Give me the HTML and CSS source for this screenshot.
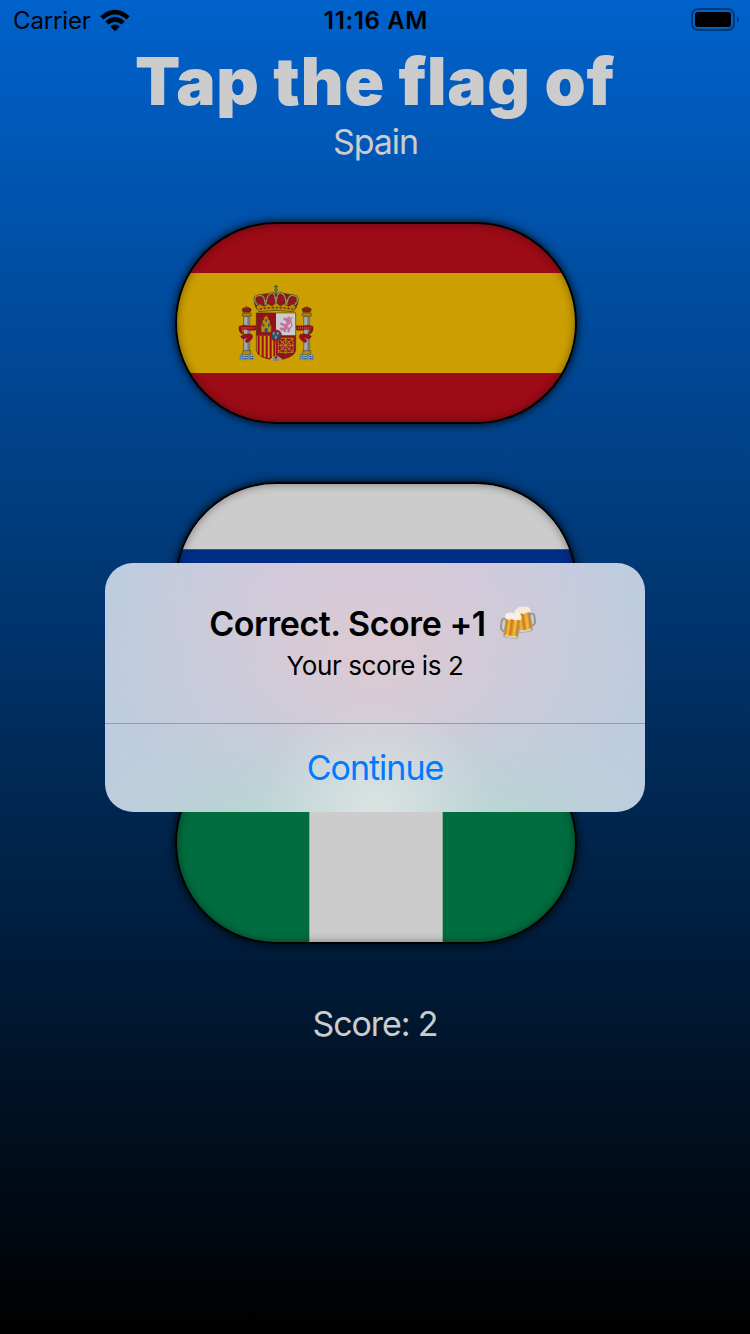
FILE: index.html
```html
<!DOCTYPE html>
<html lang="en">
<head>
<meta charset="utf-8">
<title>Guess the Flag</title>
<link rel="stylesheet" href="styles.css">
</head>
<body>
<div class="screen">
  <header class="status">
    <div class="status-left">
      <span class="carrier">Carrier</span>
      <svg class="wifi" viewBox="0 0 30 23" width="30" height="23">
        <path d="M0.3 7.3Q15-5.6 29.7 7.3L26.6 10.5Q15 .6 3.4 10.5Z"/>
        <path d="M5.3 12.4Q15 3.8 24.7 12.4L21.5 15.6Q15 10.1 8.5 15.6Z"/>
        <path d="M10.3 17.5Q15 13.5 19.7 17.5L15 22.3Z"/>
      </svg>
    </div>
    <span class="time">11:16 AM</span>
    <svg class="battery" viewBox="0 0 48 24" width="48" height="24">
      <rect x="1" y="1" width="42" height="21" rx="6" fill="none" stroke="#000" stroke-opacity=".4" stroke-width="2"/>
      <rect x="4" y="4" width="36" height="15" rx="3"/>
      <path d="M46 8Q48 9 48 11.5T46 15Z" fill-opacity=".4"/>
    </svg>
  </header>
  <main class="game">
    <h1 class="title">Tap the flag of</h1>
    <p class="country">Spain</p>
    <div class="flags">
      <div class="flag">
        <svg viewBox="0 0 400 200" width="400" height="200">
          <path fill="#9d0b17" d="M0 0H400V200H0Z"/>
          <path fill="#cc9f00" d="M0 50H400V150H0Z"/>
          <g transform="translate(49 52) scale(.33333)">
            <g stroke="#33311d" stroke-width="1.5">
              <g id="pillar">
                <path fill="#a8a8aa" d="M56 124H74V236H56Z"/>
                <path fill="#777a80" stroke="none" d="M67 125H73V235H67Z"/>
                <path fill="#b48d00" d="M52 115H79V123H52ZM54 227H77V239H51Z"/>
                <path fill="#8d1a19" d="M54 112L51 102L58 98L65 96L72 98L79 102L76 112Z"/>
                <path stroke="#6c5a08" stroke-width="2" d="M65 94V103M61 97H69"/>
                <path fill="#a6b4c3" stroke="#4b6584" d="M45 239H84V254H45Z"/>
                <path fill="none" stroke="#1d579b" stroke-width="3" d="M46 244Q51 241 55 244T65 244T75 244T84 244M46 250Q51 247 55 250T65 250T75 250T84 250"/>
              </g>
              <use href="#pillar" x="180"/>
            </g>
            <g fill="#a50b18" stroke="#531012" stroke-width="1.5">
              <path d="M42 155Q54 147 70 153L92 152V165Q74 167 63 163L52 162Q48 168 56 177L48 175Q40 167 42 155Z"/>
              <path d="M47 184Q58 176 69 177Q83 176 83 184Q83 195 64 203L61 195L72 187L53 192Z"/>
              <path d="M264 155Q252 147 236 153L214 152V165Q232 167 243 163L254 162Q258 168 250 177L258 175Q266 167 264 155Z"/>
              <path d="M259 184Q248 176 237 177Q223 176 223 184Q223 195 242 203L245 195L234 187L253 192Z"/>
            </g>
            <path stroke="#c69c35" stroke-width="3" stroke-dasharray="3 3" d="M49 159H87M219 159H257"/>
            <path fill="#96101b" stroke="#37331d" stroke-width="2" d="M94 114H212V226Q209 249 153 256Q97 249 94 226Z"/>
            <path fill="#ccc" d="M153 115H211V181H153Z"/>
            <path fill="#c99b09" d="M95 182H153V253Q97 247 95 226Z"/>
            <path stroke="#9d0c17" stroke-width="6" d="M101 182V238M113 182V247M125 182V250M137 182V252M148 182V253"/>
            <path fill="#b58b08" stroke="#423c19" stroke-width="1.5" d="M108 172V150H112V135H116V127H120V122H127V127H131V135H135V150H139V172Z"/>
            <path fill="#234d86" d="M119 160H128V172H119ZM113 148H118V155H113ZM129 148H134V155H129ZM121 133H126V140H121Z"/>
            <path fill="none" stroke="#c66e9e" stroke-width="7" stroke-linejoin="round" d="M176 130L184 135L192 128L187 141L195 139L188 149L177 151L166 145M187 145L183 158L170 164L166 158M183 156L192 162L190 172M183 157L178 171"/>
            <path fill="none" stroke="#c66e9e" stroke-width="4" d="M190 162Q205 156 199 144T202 127"/>
            <g fill="none" stroke="#b88e22" stroke-width="3.5" stroke-dasharray="4 1.5">
              <path d="M160 190H204V232H160ZM182 190V238M160 211H206M162 192L202 230M202 192L162 230"/>
              <circle cx="182" cy="211" r="14"/>
            </g>
            <circle cx="182" cy="211" r="3.5" fill="#57833a"/>
            <path fill="#a9a99e" d="M134 254L153 240L173 253Q154 260 134 254Z"/>
            <path stroke="#4a5e3c" stroke-width="2" d="M143 252H164M153 239V254"/>
            <path fill="#9a1922" d="M149 244H157V250H149Z"/>
            <circle cx="153" cy="181" r="15.5" fill="#1c4c8c" stroke="#951722" stroke-width="4"/>
            <path stroke="#b9a027" stroke-width="4" stroke-dasharray="6 2" d="M147 171V181M159 171V181M153 182V193M143 176H151M155 176H163M149 187H157"/>
            <path fill="#98111c" stroke="#473810" stroke-width="2" d="M94 101Q78 67 104 60Q122 54 153 56Q184 54 203 60Q230 67 212 101Q153 87 94 101Z"/>
            <path fill="none" stroke="#4a3b14" stroke-width="7" d="M99 92Q77 65 104 61Q119 60 121 89M123 90Q125 55 143 54Q151 55 153 88M153 88Q155 55 165 54Q183 56 183 90M185 89Q189 60 204 61Q229 66 207 92"/>
            <path fill="none" stroke="#b9a66b" stroke-width="4" stroke-dasharray="3 1" d="M99 92Q77 65 104 61Q119 60 121 89M123 90Q125 55 143 54Q151 55 153 88M153 88Q155 55 165 54Q183 56 183 90M185 89Q189 60 204 61Q229 66 207 92"/>
            <path fill="#b58b08" stroke="#49390f" stroke-width="2" d="M93 96L104 87L117 94L129 86L142 93L153 82L166 93L178 86L190 94L203 87L213 96L205 110Q153 102 101 110Z"/>
            <path fill="none" stroke="#811a17" stroke-width="4" stroke-dasharray="7 5" d="M104 102Q153 94 204 102"/>
            <path stroke="#4a5936" stroke-width="4" d="M153 29V54M147 35H159"/>
            <circle cx="153" cy="45" r="5" fill="#4b7385" stroke="#514817"/>
          </g>
        </svg>
      </div>
      <div class="flag">
        <svg viewBox="0 0 400 200" width="400" height="200">
          <path fill="#ccc" d="M0 0H400V66.5H0Z"/>
          <path fill="#002e85" d="M0 66.5H400V133.5H0Z"/>
          <path fill="#a6101d" d="M0 133.5H400V200H0Z"/>
        </svg>
      </div>
      <div class="flag">
        <svg viewBox="0 0 400 200" width="400" height="200">
          <path fill="#006d40" d="M0 0H400V200H0Z"/>
          <path fill="#ccc" d="M133.3 0H266.7V200H133.3Z"/>
        </svg>
      </div>
    </div>
    <p class="score">Score: 2</p>
  </main>
  <section class="alert" role="alertdialog">
    <div class="alert-body">
      <h2 class="alert-title"><span class="alert-text">Correct. Score +1</span>
        <svg class="beers" viewBox="0 0 37 34" width="37" height="34" role="img" aria-label="Clinking beer mugs">
          <defs>
            <linearGradient id="beer"><stop offset="0" stop-color="#b8680f"/><stop offset=".25" stop-color="#f5bb3c"/><stop offset=".45" stop-color="#ce7716"/><stop offset=".7" stop-color="#f8bf3c"/><stop offset="1" stop-color="#b26a19"/></linearGradient>
          </defs>
          <g transform="rotate(-8 24 15)">
            <path d="M30 9H33Q35 9 35 12V17Q35 20 30 21" fill="none" stroke="#989a91" stroke-width="2"/>
            <path d="M17 6H31V25Q24 27 17 25Z" fill="url(#beer)" stroke="#aaa696"/>
            <path d="M18 24Q24 26 30 24" stroke="#d8d0b7" stroke-width="2" fill="none"/>
            <path d="M17 8Q14 4 18 2Q22-1 25 1Q31 0 32 5Q32 8 28 7Q25 9 22 7Q19 9 17 8Z" fill="#f7eadc"/>
          </g>
          <g transform="rotate(8 12 21)">
            <path d="M6 14H3Q1 14 1 17V22Q1 26 6 27" fill="none" stroke="#989a91" stroke-width="2"/>
            <path d="M5 12H19V31Q12 33 5 31Z" fill="url(#beer)" stroke="#aaa696"/>
            <path d="M6 30Q12 32 18 30" stroke="#d8d0b7" stroke-width="2" fill="none"/>
            <path d="M5 14Q2 11 5 8Q9 6 12 7Q19 5 20 10Q21 14 17 13Q13 15 11 13Q8 15 5 14Z" fill="#fbefe3"/>
          </g>
        </svg>
      </h2>
      <p class="alert-message">Your score is 2</p>
    </div>
    <button class="alert-action">Continue</button>
  </section>
</div>
</body>
</html>
```
FILE: styles.css
```css
* { box-sizing: border-box; }

body { margin: 0; }

h1, h2, p { margin: 0; }

.screen {
  position: relative;
  width: 750px;
  height: 1334px;
  overflow: hidden;
  background: linear-gradient(#0062cc, #000);
  font-family: Inter, "Liberation Sans", sans-serif;
  color: #ccc;
}

.status {
  display: grid;
  grid-template-columns: 1fr auto 1fr;
  height: 40px;
  padding: 0 11px 0 13px;
  align-items: center;
  color: #000;
  font-size: 24px;
}

.status-left { display: flex; align-items: center; gap: 9px; }
.carrier { letter-spacing: -0.15px; }
.time { font-weight: 600; letter-spacing: 0.65px; }
.battery { justify-self: end; }

.game {
  display: flex;
  flex-direction: column;
  align-items: center;
}

.title {
  height: 82px;
  line-height: 82px;
  font-size: 66px;
  font-weight: 900;
  letter-spacing: 0.65px;
  white-space: nowrap;
}

.country, .score {
  height: 40px;
  line-height: 40px;
  font-size: 34px;
  letter-spacing: -1.1px;
}

.country { padding-left: 1px; }

.score { line-height: 39px; }

.flags {
  display: flex;
  flex-direction: column;
  gap: 58px;
  margin: 60px 0 60px 2px;
}

.flag {
  position: relative;
  width: 402px;
  height: 202px;
  padding: 1px;
  border-radius: 101px;
  box-shadow: 0 0 10px rgba(0, 0, 0, 0.95);
}

.flag svg { display: block; border-radius: 100px; }

.flag::after {
  content: "";
  position: absolute;
  inset: 0;
  border: 2px solid #000;
  border-radius: 101px;
  box-shadow: inset 0 0 10px rgba(0, 0, 0, 0.4);
}

.alert {
  position: absolute;
  left: 105px;
  top: 563px;
  width: 540px;
  height: 249px;
  display: flex;
  flex-direction: column;
  border-radius: 28px;
  overflow: hidden;
  color: #000;
  text-align: center;
  background:
    radial-gradient(ellipse 120px 110px at 50% 100%, #dae4e2, rgba(218, 228, 226, 0.5) 50%, rgba(218, 228, 226, 0)),
    radial-gradient(ellipse 180px 110px at 28% 104%, #b9d6d1, rgba(185, 214, 209, 0.4) 50%, rgba(185, 214, 209, 0)),
    radial-gradient(ellipse 180px 110px at 72% 104%, #b9d6d1, rgba(185, 214, 209, 0.4) 50%, rgba(185, 214, 209, 0)),
    radial-gradient(ellipse 270px 180px at 50% 38%, #ddcad2, rgba(221, 202, 210, 0.5) 50%, rgba(221, 202, 210, 0)),
    radial-gradient(ellipse 270px 130px at 50% 0, #cfc9e1, rgba(207, 201, 225, 0)),
    #beccdf;
}

.alert-body {
  height: 161px;
  padding-top: 39px;
  border-bottom: 1px solid #8d9caf;
}

.alert-title {
  display: flex;
  justify-content: center;
  align-items: center;
  gap: 14px;
  height: 42px;
  padding-right: 4px;
  font-size: 34px;
  font-weight: 600;
  letter-spacing: -0.45px;
  white-space: nowrap;
}

.alert-message {
  height: 42px;
  line-height: 44px;
  font-size: 26px;
  letter-spacing: -0.4px;
}

.alert-action {
  flex: 1;
  border: 0;
  padding: 0 0 1px;
  background: none;
  font: 400 34px Inter, "Liberation Sans", sans-serif;
  letter-spacing: -1px;
  color: #007aff;
}
```
